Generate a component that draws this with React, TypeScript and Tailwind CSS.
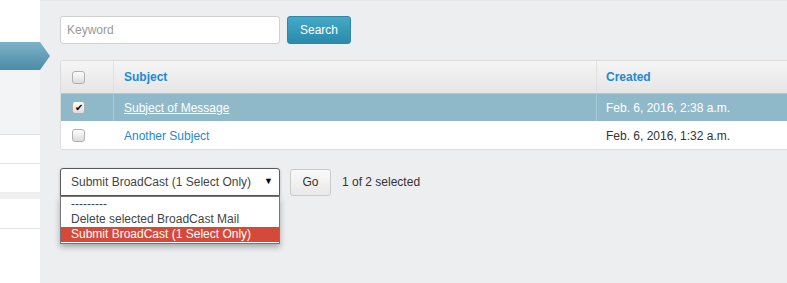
const font = "font-['Liberation_Sans',Arial,sans-serif]";

function Checkbox({ checked = false }: { checked?: boolean }) {
  return (
    <span className="flex h-[13px] w-[13px] items-center justify-center rounded-[3px] border border-[#b0b0b0] bg-gradient-to-b from-[#fdfdfd] to-[#dcdcdc] text-[10px] leading-none text-black">
      {checked ? "✔" : null}
    </span>
  );
}

function Sidebar() {
  return (
    <div className="w-[40px] shrink-0 bg-white">
      <div className="h-[42px]" />
      <div className="relative z-10 h-[28px] w-[50px] bg-gradient-to-b from-[#7db3c7] to-[#4c8ba7] [clip-path:polygon(0_0,40px_0,50px_50%,40px_100%,0_100%)]" />
      <div className="h-[64px] bg-[#f3f4f6]" />
      <div className="h-[29px] border-t border-[#e3e3e3]" />
      <div className="h-[29px] border-t border-[#e3e3e3]" />
      <div className="h-[7px] bg-[#efefef]" />
      <div className="h-[29px]" />
      <div className="border-t border-[#e3e3e3]" />
    </div>
  );
}

type Row = { subject: string; created: string; selected?: boolean };

const rows: Row[] = [
  { subject: "Subject of Message", created: "Feb. 6, 2016, 2:38 a.m.", selected: true },
  { subject: "Another Subject", created: "Feb. 6, 2016, 1:32 a.m." },
];

function MessageTable() {
  return (
    <div className="w-[760px] overflow-hidden rounded-[3px] border border-[#dcdcdc] bg-white">
      <div className="flex h-[33px] border-b border-[#bcc5c9] bg-gradient-to-b from-[#f5f5f5] to-[#e5e5e5] text-[12px] font-bold text-[#1b8ad3]">
        <div className="flex w-[53px] items-center border-r border-[#e0e0e0] pl-[11px]">
          <Checkbox />
        </div>
        <div className="flex w-[483px] items-center border-r border-[#e0e0e0] pl-[10px]">Subject</div>
        <div className="flex items-center pl-[9px]">Created</div>
      </div>
      {rows.map((row) => (
        <div
          key={row.subject}
          className={
            row.selected
              ? "flex h-[28px] border-b border-white bg-[#8fb9c9] text-[12px] text-white"
              : "flex h-[27px] bg-white text-[12px] text-[#333]"
          }
        >
          <div
            className={
              row.selected
                ? "flex w-[53px] items-center border-r border-[#a9cad6] pl-[11px]"
                : "flex w-[53px] items-center border-r border-white pl-[11px]"
            }
          >
            <Checkbox checked={row.selected} />
          </div>
          <div
            className={
              row.selected
                ? "flex w-[483px] items-center border-r border-[#a9cad6] pl-[10px]"
                : "flex w-[483px] items-center border-r border-white pl-[10px]"
            }
          >
            <span className={row.selected ? "text-white underline" : "text-[#1b8ad3]"}>{row.subject}</span>
          </div>
          <div className="flex items-center pl-[9px]">{row.created}</div>
        </div>
      ))}
    </div>
  );
}

function ActionBar() {
  return (
    <div className="mt-[18px] flex items-center">
      <div className="relative">
        <div className="flex h-[28px] w-[220px] items-center justify-between rounded-t-[3px] border border-[#5a5a5a] bg-white pl-[10px] pr-[6px] text-[12px] text-[#444] shadow-[0_1px_3px_rgba(0,0,0,0.25)]">
          <span>Submit BroadCast (1 Select Only)</span>
          <span className="text-[9px] text-black">▼</span>
        </div>
        <div className="absolute left-0 top-[28px] z-20 w-[220px] border border-[#777] bg-white pb-[1px] text-[12px] leading-[15px] text-[#444] shadow-[0_3px_6px_rgba(0,0,0,0.3)]">
          <div className="pl-[10px]">---------</div>
          <div className="pl-[10px]">Delete selected BroadCast Mail</div>
          <div className="bg-[#d5493a] pl-[10px] text-white">Submit BroadCast (1 Select Only)</div>
        </div>
      </div>
      <button className="ml-[10px] h-[27px] w-[41px] rounded-[3px] border border-[#cacaca] bg-gradient-to-b from-[#fafafa] to-[#e8e8e8] text-[12px] text-[#333]">
        Go
      </button>
      <span className="ml-[11px] text-[12px] text-[#333]">1 of 2 selected</span>
    </div>
  );
}

export default function App() {
  return (
    <div className={`${font} flex h-[283px] w-[787px] overflow-hidden`}>
      <Sidebar />
      <div className="flex-1 border-t border-[#e6e7e9] bg-[#edeef0] pl-[20px] pt-[15px]">
        <div className="flex items-center">
          <input
            className="h-[28px] w-[220px] rounded-[3px] border border-[#d0d0d0] bg-white px-[6px] text-[12px] text-[#444] placeholder:text-[#999] outline-none"
            placeholder="Keyword"
          />
          <button className="ml-[7px] h-[28px] w-[64px] rounded-[3px] border border-[#2e87a6] bg-gradient-to-b from-[#45a9c8] to-[#2a8aab] text-[12px] text-white">
            Search
          </button>
        </div>
        <div className="mt-[16px]">
          <MessageTable />
        </div>
        <ActionBar />
      </div>
    </div>
  );
}
